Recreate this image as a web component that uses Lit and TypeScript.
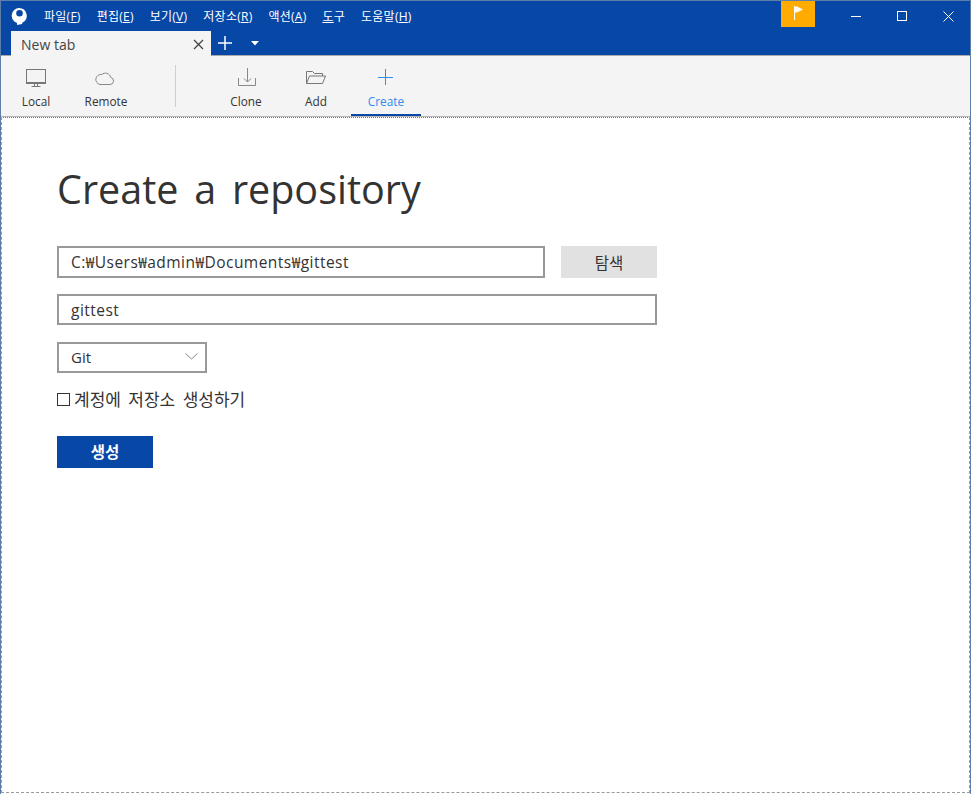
import { LitElement, html, css } from "lit";
import { customElement } from "lit/decorators.js";

const menu = [
  ["파일(", "F", ")"],
  ["편집(", "E", ")"],
  ["보기(", "V", ")"],
  ["저장소(", "R", ")"],
  ["액션(", "A", ")"],
  ["", "도", "구"],
  ["도움말(", "H", ")"],
];

@customElement("app-root")
export class AppRoot extends LitElement {
  static styles = css`
    :host {
      display: block;
      width: 971px;
      height: 794px;
      font-family: "Open Sans", "Noto Sans CJK KR", sans-serif;
      color: #333;
    }
    .win {
      box-sizing: border-box;
      width: 971px;
      height: 794px;
      border: 1px solid #5d7ea6;
      border-bottom: none;
      padding-bottom: 1px;
      display: flex;
      flex-direction: column;
      background: #fff;
    }
    .head {
      background: #0747a6;
      height: 54px;
      display: flex;
      flex-direction: column;
      flex: none;
    }
    .titlebar {
      height: 30px;
      display: flex;
      align-items: flex-start;
      flex: none;
    }
    .logo {
      width: 16px;
      height: 17px;
      margin: 7px 0 0 10px;
      flex: none;
    }
    .menu {
      display: flex;
      gap: 16px;
      margin: 7px 0 0 17px;
      color: #fff;
      font-size: 12px;
      letter-spacing: 0.25px;
      line-height: 17px;
      white-space: nowrap;
    }
    .menu u {
      text-underline-offset: 1px;
    }
    .spacer {
      flex: 1;
    }
    .flag {
      width: 34px;
      height: 26px;
      background: #ffab00;
      flex: none;
      display: flex;
      align-items: center;
      justify-content: center;
    }
    .winbtns {
      display: flex;
      margin: 0 -1px 0 18px;
      flex: none;
    }
    .winbtn {
      width: 46px;
      height: 30px;
      display: flex;
      align-items: center;
      justify-content: center;
    }
    .tabs {
      height: 24px;
      display: flex;
      align-items: stretch;
      padding-left: 10px;
    }
    .tab {
      width: 200px;
      background: #f4f4f4;
      box-sizing: border-box;
      padding: 2px 7px 0 10px;
      margin-bottom: -1px;
      position: relative;
      z-index: 1;
      display: flex;
      align-items: center;
      justify-content: space-between;
      font-size: 14px;
      color: #444;
    }
    .tabact {
      display: flex;
      align-items: center;
    }
    .plus {
      margin-left: 7px;
    }
    .caret {
      margin-left: 19px;
    }
    .toolbar {
      height: 62px;
      flex: none;
      box-sizing: border-box;
      background: #f4f4f4;
      border-top: 1px solid #a9a9a9;
      border-bottom: 1px solid #b5b5b5;
      display: flex;
      align-items: stretch;
    }
    .tool {
      width: 70px;
      display: flex;
      flex-direction: column;
      align-items: center;
      font-size: 11.8px;
      color: #333;
      box-sizing: border-box;
      padding-top: 10px;
      flex: none;
      line-height: 17px;
    }
    .tool svg {
      display: block;
      margin-bottom: 5px;
    }
    .tool.on {
      color: #2f8cf0;
      border-bottom: 2px solid #0747a6;
    }
    .sep {
      width: 1px;
      height: 42px;
      background: #cfcfcf;
      margin: 9px 35px 0 34px;
      flex: none;
    }
    .body {
      flex: 1;
      box-sizing: border-box;
      border: 1px dashed #9a9a9a;
      border-top: 1px dotted #777;
      padding: 42px 0 0 55px;
      min-height: 0;
    }
    h1 {
      margin: 0;
      font-weight: 400;
      font-size: 39.5px;
      line-height: 58px;
      color: #333;
      word-spacing: 5.5px;
    }
    .row {
      display: flex;
      gap: 16px;
      width: 600px;
      margin-top: 28px;
    }
    .field {
      box-sizing: border-box;
      border: 2px solid #999;
      height: 32px;
      padding: 0 12px;
      display: flex;
      align-items: center;
      font-size: 15.5px;
      letter-spacing: 0.46px;
      color: #333;
      background: #fff;
    }
    .grow {
      flex: 1;
      padding-bottom: 2px;
    }
    .browse {
      width: 96px;
      height: 32px;
      background: #e1e1e1;
      display: flex;
      align-items: center;
      justify-content: center;
      font-size: 15.5px;
      color: #333;
      flex: none;
    }
    .name {
      width: 600px;
      height: 31px;
      margin-top: 16px;
    }
    .select {
      width: 150px;
      height: 31px;
      margin-top: 17px;
      justify-content: space-between;
      padding: 0 7px 2px 12px;
      font-size: 15px;
      letter-spacing: 0;
    }
    .check {
      display: flex;
      align-items: center;
      gap: 4px;
      margin-top: 15px;
      font-size: 17px;
      line-height: 23px;
      color: #333;
      word-spacing: 3px;
    }
    .box {
      box-sizing: border-box;
      width: 13px;
      height: 13px;
      border: 1px solid #333;
      flex: none;
    }
    .create {
      width: 96px;
      height: 32px;
      box-sizing: border-box;
      padding-bottom: 1px;
      background: #0747a6;
      color: #fff;
      font-weight: 700;
      font-size: 15.5px;
      display: flex;
      align-items: center;
      justify-content: center;
      margin-top: 25px;
    }
  `;

  render() {
    return html`
      <div class="win">
        <div class="head">
          <div class="titlebar">
            <svg class="logo" viewBox="0 0 16 17">
              <path fill="#fff" fill-rule="evenodd" d="M8 0a7.7 7.7 0 0 1 3.2 14.7V16L6 17V15A7.7 7.7 0 0 1 8 0ZM8.5 2a3.3 3.3 0 1 0 0 6.6a3.3 3.3 0 0 0 0-6.6Z" />
            </svg>
            <div class="menu">
              ${menu.map(([a, u, b]) => html`<span>${a}<u>${u}</u>${b}</span>`)}
            </div>
            <div class="spacer"></div>
            <div class="flag">
              <svg width="12" height="16" viewBox="0 0 12 16">
                <path d="M2.5 0v14" stroke="#fff" stroke-width="1" fill="none" />
                <path d="M3 0.5h2l6 3-6 3H3Z" fill="#fff" opacity="0.95" />
              </svg>
            </div>
            <div class="winbtns">
              <div class="winbtn">
                <svg width="10" height="10" viewBox="0 0 10 10"><path d="M0 5.5h10" stroke="#fff" /></svg>
              </div>
              <div class="winbtn">
                <svg width="10" height="10" viewBox="0 0 10 10"><rect x="0.5" y="0.5" width="9" height="9" fill="none" stroke="#fff" /></svg>
              </div>
              <div class="winbtn">
                <svg width="11" height="11" viewBox="0 0 11 11"><path d="M.5.5l10 10M10.5.5l-10 10" stroke="#fff" /></svg>
              </div>
            </div>
          </div>
          <div class="tabs">
            <div class="tab">
              <span>New tab</span>
              <svg width="11" height="11" viewBox="0 0 11 11"><path d="M1 1l9 9M10 1l-9 9" stroke="#444" stroke-width="1.3" /></svg>
            </div>
            <div class="tabact">
              <svg class="plus" width="14" height="14" viewBox="0 0 14 14"><path d="M7 0v14M0 7h14" stroke="#fff" stroke-width="1.5" /></svg>
              <svg class="caret" width="8" height="5" viewBox="0 0 8 5"><path d="M0 0h8L4 4.5Z" fill="#fff" /></svg>
            </div>
          </div>
        </div>
        <div class="toolbar">
          <div class="tool">
            <svg width="22" height="22" viewBox="0 0 22 22" fill="none" stroke="#777"><rect x="1.5" y="3.5" width="19" height="14" /><path d="M1.5 16.5h19M9.5 18v3M12.5 18v3M6.5 20.5h9" /></svg>
            <span>Local</span>
          </div>
          <div class="tool">
            <svg width="22" height="22" viewBox="0 0 22 22" fill="none" stroke="#888"><path d="M5 18.5h10a3.6 3.6 0 0 0 .8-7.1A5.5 5.5 0 0 0 6.8 8.5 5 5 0 0 0 5 18.5Z" /></svg>
            <span>Remote</span>
          </div>
          <div class="sep"></div>
          <div class="tool">
            <svg width="22" height="22" viewBox="0 0 22 22" fill="none" stroke="#888"><path d="M3.5 12v7.5h17V12M12.5 2v14M9 12.5l3.5 3.5 3.5-3.5" /></svg>
            <span>Clone</span>
          </div>
          <div class="tool">
            <svg width="22" height="22" viewBox="0 0 22 22" fill="none" stroke="#777"><path d="M1.5 17.5v-12h6l2 2h8v2.5M1.5 17.5l3-7.5h16l-3 7.5Z" /></svg>
            <span>Add</span>
          </div>
          <div class="tool on">
            <svg width="22" height="22" viewBox="0 0 22 22" fill="none" stroke="#2f8cf0"><path d="M10.5 3v16M3 11.5h15" /></svg>
            <span>Create</span>
          </div>
        </div>
        <div class="body">
          <h1>Create a repository</h1>
          <div class="row">
            <div class="field grow">C:₩Users₩admin₩Documents₩gittest</div>
            <div class="browse">탐색</div>
          </div>
          <div class="field name">gittest</div>
          <div class="field select">
            <span>Git</span>
            <svg width="13" height="7" viewBox="0 0 13 7"><path d="M.5.5l6 5.5 6-5.5" fill="none" stroke="#888" /></svg>
          </div>
          <div class="check"><span class="box"></span><span>계정에 저장소 생성하기</span></div>
          <div class="create">생성</div>
        </div>
      </div>
    `;
  }
}
